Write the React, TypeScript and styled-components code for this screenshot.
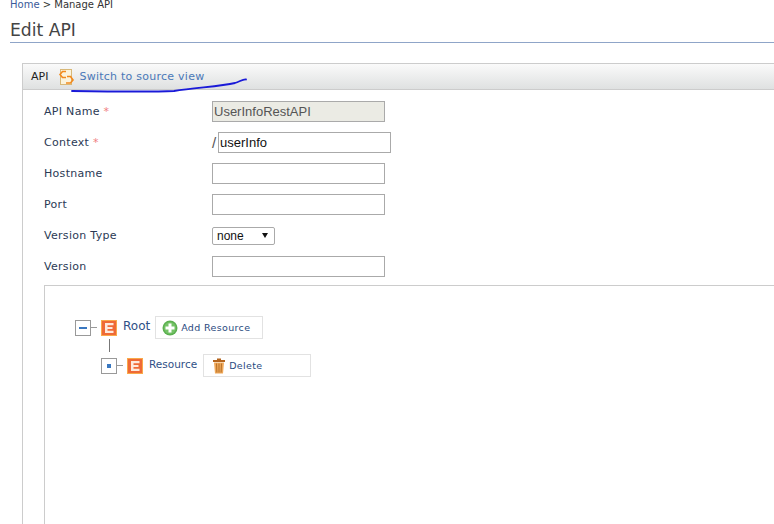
import React from 'react';
import styled, { createGlobalStyle } from 'styled-components';

const GlobalStyle = createGlobalStyle`
  html, body {
    margin: 0;
    padding: 0;
    height: 524px;
    overflow: hidden;
    background: #fff;
    font-family: "DejaVu Sans", Verdana, sans-serif;
  }
`;

const Page = styled.div`
  position: relative;
  width: 774px;
  height: 524px;
  overflow: hidden;
  padding-left: 10px;
  box-sizing: border-box;
`;

const Breadcrumb = styled.div`
  height: 10px;
  line-height: 9px;
  font-size: 10px;
  color: #333;
  white-space: nowrap;
`;

const Crumb = styled.a`
  color: #3a5a9a;
`;

const Title = styled.h1`
  margin: 0;
  height: 33px;
  line-height: 40px;
  box-sizing: border-box;
  font-size: 17.2px;
  font-weight: 400;
  color: #444;
  border-bottom: 1px solid #8fa5c8;
`;

const Panel = styled.div`
  margin: 20px 0 0 12px;
  border: 1px solid #ccc;
  border-right: 0;
  border-bottom: 0;
  height: 470px;
`;

const PanelHeader = styled.div`
  height: 25px;
  display: flex;
  align-items: center;
  padding-left: 8px;
  border-bottom: 1px solid #ccc;
  background: linear-gradient(#fafafa, #dfe1e1);
`;

const PanelTitle = styled.span`
  font-size: 11px;
  color: #222;
  margin-right: 10px;
`;

const SourceLink = styled.a`
  font-size: 11px;
  letter-spacing: 0.25px;
  color: #4a78b8;
  margin-left: 4px;
`;

const PanelBody = styled.div`
  padding: 11px 0 0 21px;
`;

const Row = styled.div`
  display: grid;
  grid-template-columns: 168px 1fr;
  align-items: center;
  height: 21px;
  margin-bottom: 10px;
`;

const Label = styled.label`
  font-size: 11px;
  letter-spacing: 0.3px;
  color: #2b3a55;
`;

const Required = styled.span`
  color: #f08080;
`;

const Field = styled.div`
  display: flex;
  align-items: center;
`;

const Slash = styled.span`
  font-size: 15px;
  font-family: "Liberation Sans", Arial, sans-serif;
  color: #555;
  width: 6px;
`;

const TextInput = styled.input<{ $locked?: boolean }>`
  width: 173px;
  height: 21px;
  box-sizing: border-box;
  padding: 0 1px;
  border: 1px solid #aaa;
  border-radius: 0;
  outline: none;
  font-family: "Liberation Sans", Arial, sans-serif;
  font-size: 13px;
  color: ${p => (p.$locked ? '#555' : '#111')};
  background: ${p => (p.$locked ? '#ebebe4' : '#fff')};
`;

const Select = styled.div`
  width: 63px;
  height: 18px;
  box-sizing: border-box;
  border: 1px solid #aaa;
  border-radius: 2px;
  padding: 0 4px;
  display: flex;
  align-items: center;
  justify-content: space-between;
  font-family: "Liberation Sans", Arial, sans-serif;
  font-size: 12px;
  color: #111;
`;

const Caret = styled.span`
  width: 0;
  height: 0;
  margin-right: 2px;
  border-left: 3px solid transparent;
  border-right: 3px solid transparent;
  border-top: 5px solid #111;
`;

const TreeBox = styled.div`
  margin-top: -2px;
  border: 1px solid #ccc;
  border-right: 0;
  height: 300px;
  padding: 30px 0 0 30px;
`;

const TreeRow = styled.div<{ $indent?: number }>`
  display: flex;
  align-items: center;
  margin-left: ${p => p.$indent || 0}px;
`;

const Toggle = styled.span`
  width: 16px;
  height: 16px;
  box-sizing: border-box;
  border: 1px solid #999;
  display: flex;
  align-items: center;
  justify-content: center;
  flex: none;
`;

const ToggleMark = styled.span<{ $dot?: boolean }>`
  width: ${p => (p.$dot ? 4 : 8)}px;
  height: ${p => (p.$dot ? 4 : 2)}px;
  background: #3a78c0;
`;

const Dash = styled.span`
  width: 6px;
  height: 1px;
  background: #999;
  margin-right: 4px;
`;

const NodeLabel = styled.span<{ $small?: boolean }>`
  font-size: ${p => (p.$small ? 10.5 : 12)}px;
  color: #2f4f86;
  margin-left: 6px;
  margin-top: -4px;
`;

const NodeButton = styled.button<{ $gap: number; $pad: number }>`
  width: 108px;
  height: 23px;
  margin-left: ${p => p.$gap}px;
  padding: 0 0 0 ${p => p.$pad}px;
  display: flex;
  align-items: center;
  gap: 3px;
  background: #fff;
  border: 1px solid #e2e2e2;
  font-family: inherit;
  font-size: 9.5px;
  letter-spacing: 0.35px;
  color: #2a4a80;
`;

const Connector = styled.div`
  width: 1px;
  height: 13px;
  margin: 0 0 2px 34px;
  background: #777;
`;

const Scribble = styled.svg`
  position: absolute;
  left: 70px;
  top: 74px;
`;

const SourceIcon = () => (
  <svg width="17" height="18" viewBox="0 0 17 18">
    <rect x="2.5" y="1.5" width="11" height="15" fill="#fbf3dc" stroke="#d8b878" />
    <path d="M8 3.500H4.500L2 6.500l2.500 3H8" fill="none" stroke="#f28a1e" strokeWidth="1.6" />
    <path d="M9 8.500h3.500L15 12l-2.500 3H8" fill="none" stroke="#f28a1e" strokeWidth="1.6" />
  </svg>
);

const ElementIcon = () => (
  <svg width="16" height="16" viewBox="0 0 16 16">
    <rect width="16" height="16" fill="#f9a94a" />
    <rect x="1" y="1" width="14" height="14" fill="#ef6a36" />
    <path d="M4 3h8.500v2.200H6.500v1.700h5v2.200h-5v1.700h6V13H4z" fill="#fde9dc" />
  </svg>
);

const AddIcon = () => (
  <svg width="16" height="16" viewBox="0 0 16 16">
    <circle cx="8" cy="8" r="7.500" fill="#5cb050" />
    <circle cx="8" cy="8" r="6" fill="#74c266" />
    <path d="M6.500 3.500h3v3h3v3h-3v3h-3v-3h-3v-3h3z" fill="#fff" />
  </svg>
);

const TrashIcon = () => (
  <svg width="14" height="16" viewBox="0 0 14 16">
    <path d="M5 0.500h4v1.500h4v2H1v-2h4z" fill="#b5651d" />
    <path d="M2 4.500h10l-1 11H3z" fill="#f0a858" />
    <path d="M4.500 5.500l.4 9M7 5.500v9M9.500 5.500l-.4 9" stroke="#b5702a" strokeWidth="1" fill="none" />
  </svg>
);

const App: React.FC = () => {
  return (
    <Page>
      <GlobalStyle />
      <Breadcrumb>
        <Crumb>Home</Crumb> &gt; Manage API
      </Breadcrumb>
      <Title>Edit API</Title>
      <Panel>
        <PanelHeader>
          <PanelTitle>API</PanelTitle>
          <SourceIcon />
          <SourceLink>Switch to source view</SourceLink>
        </PanelHeader>
        <PanelBody>
          <Row>
            <Label>API Name <Required>*</Required></Label>
            <Field><TextInput $locked readOnly value="UserInfoRestAPI" /></Field>
          </Row>
          <Row>
            <Label>Context <Required>*</Required></Label>
            <Field><Slash>/</Slash><TextInput readOnly value="userInfo" /></Field>
          </Row>
          <Row>
            <Label>Hostname</Label>
            <Field><TextInput readOnly value="" /></Field>
          </Row>
          <Row>
            <Label>Port</Label>
            <Field><TextInput readOnly value="" /></Field>
          </Row>
          <Row>
            <Label>Version Type</Label>
            <Field><Select>none<Caret /></Select></Field>
          </Row>
          <Row>
            <Label>Version</Label>
            <Field><TextInput readOnly value="" /></Field>
          </Row>
          <TreeBox>
            <TreeRow>
              <Toggle><ToggleMark /></Toggle>
              <Dash />
              <ElementIcon />
              <NodeLabel>Root</NodeLabel>
              <NodeButton $gap={5} $pad={6}><AddIcon />Add Resource</NodeButton>
            </TreeRow>
            <Connector />
            <TreeRow $indent={26}>
              <Toggle><ToggleMark $dot /></Toggle>
              <Dash />
              <ElementIcon />
              <NodeLabel $small>Resource</NodeLabel>
              <NodeButton $gap={6} $pad={8}><TrashIcon />Delete</NodeButton>
            </TreeRow>
          </TreeBox>
        </PanelBody>
      </Panel>
      <Scribble width="180" height="20" viewBox="0 0 180 20">
        <path d="M2 17C40 17.500 80 18 104 17C125 13.500 150 12.500 165 9C170 7.500 173 5 176 5.500" fill="none" stroke="#1a1ad8" strokeWidth="1.800" strokeLinecap="round" />
      </Scribble>
    </Page>
  );
};

export default App;
